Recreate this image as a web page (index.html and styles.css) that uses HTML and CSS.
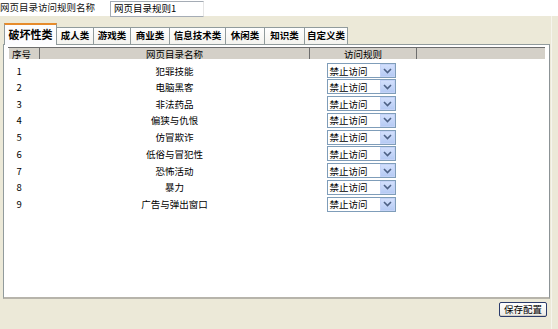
FILE: index.html
```html
<!DOCTYPE html>
<html>
<head>
<meta charset="utf-8">
<link rel="stylesheet" href="styles.css">
</head>
<body>
<div class="top">
  <span class="label">网页目录访问规则名称</span>
  <span class="input">网页目录规则1</span>
</div>
<div class="main">
  <div class="tabs">
    <div class="tab active">破坏性类</div>
    <div class="tab w37">成人类</div>
    <div class="tab w37">游戏类</div>
    <div class="tab w39">商业类</div>
    <div class="tab w56">信息技术类</div>
    <div class="tab w39">休闲类</div>
    <div class="tab w40">知识类</div>
    <div class="tab w43">自定义类</div>
  </div>
  <div class="panel">
    <table class="grid">
      <thead>
        <tr><th class="c1">序号</th><th class="c2">网页目录名称</th><th class="c3">访问规则</th><th class="c4"></th></tr>
      </thead>
      <tbody>
        <tr><td class="num">1</td><td class="name">犯罪技能</td><td class="rule"><span class="sel">禁止访问<i class="dd"><svg width="9" height="6" viewBox="0 0 9 6"><path d="M1 1l3.5 3.5L8 1" fill="none" stroke="#4d6185" stroke-width="1.6"/></svg></i></span></td><td></td></tr>
        <tr><td class="num">2</td><td class="name">电脑黑客</td><td class="rule"><span class="sel">禁止访问<i class="dd"><svg width="9" height="6" viewBox="0 0 9 6"><path d="M1 1l3.5 3.5L8 1" fill="none" stroke="#4d6185" stroke-width="1.6"/></svg></i></span></td><td></td></tr>
        <tr><td class="num">3</td><td class="name">非法药品</td><td class="rule"><span class="sel">禁止访问<i class="dd"><svg width="9" height="6" viewBox="0 0 9 6"><path d="M1 1l3.5 3.5L8 1" fill="none" stroke="#4d6185" stroke-width="1.6"/></svg></i></span></td><td></td></tr>
        <tr><td class="num">4</td><td class="name">偏狭与仇恨</td><td class="rule"><span class="sel">禁止访问<i class="dd"><svg width="9" height="6" viewBox="0 0 9 6"><path d="M1 1l3.5 3.5L8 1" fill="none" stroke="#4d6185" stroke-width="1.6"/></svg></i></span></td><td></td></tr>
        <tr><td class="num">5</td><td class="name">仿冒欺诈</td><td class="rule"><span class="sel">禁止访问<i class="dd"><svg width="9" height="6" viewBox="0 0 9 6"><path d="M1 1l3.5 3.5L8 1" fill="none" stroke="#4d6185" stroke-width="1.6"/></svg></i></span></td><td></td></tr>
        <tr><td class="num">6</td><td class="name">低俗与冒犯性</td><td class="rule"><span class="sel">禁止访问<i class="dd"><svg width="9" height="6" viewBox="0 0 9 6"><path d="M1 1l3.5 3.5L8 1" fill="none" stroke="#4d6185" stroke-width="1.6"/></svg></i></span></td><td></td></tr>
        <tr><td class="num">7</td><td class="name">恐怖活动</td><td class="rule"><span class="sel">禁止访问<i class="dd"><svg width="9" height="6" viewBox="0 0 9 6"><path d="M1 1l3.5 3.5L8 1" fill="none" stroke="#4d6185" stroke-width="1.6"/></svg></i></span></td><td></td></tr>
        <tr><td class="num">8</td><td class="name">暴力</td><td class="rule"><span class="sel">禁止访问<i class="dd"><svg width="9" height="6" viewBox="0 0 9 6"><path d="M1 1l3.5 3.5L8 1" fill="none" stroke="#4d6185" stroke-width="1.6"/></svg></i></span></td><td></td></tr>
        <tr><td class="num">9</td><td class="name">广告与弹出窗口</td><td class="rule"><span class="sel">禁止访问<i class="dd"><svg width="9" height="6" viewBox="0 0 9 6"><path d="M1 1l3.5 3.5L8 1" fill="none" stroke="#4d6185" stroke-width="1.6"/></svg></i></span></td><td></td></tr>
      </tbody>
    </table>
  </div>
  <div class="footer">
    <button class="btn">保存配置</button>
  </div>
</div>
</body>
</html>
```

FILE: styles.css
```css
* { box-sizing: border-box; }
html, body { margin: 0; padding: 0; }
body {
  width: 558px;
  height: 329px;
  background: #ece9d8;
  font-family: "Noto Sans CJK SC", "Noto Sans", sans-serif;
  font-size: 9.5px;
  color: #000;
  overflow: hidden;
}
.top {
  height: 16px;
  background: #fff;
  display: flex;
  align-items: flex-start;
}
.label {
  width: 110px;
  line-height: 13px;
  padding-top: 1px;
  font-size: 9.5px;
  color: #111;
}
.input {
  width: 94px;
  height: 16px;
  margin-top: 1px;
  border: 1px solid #a5acb5;
  border-right-color: #e6e6e6;
  padding-left: 3px;
  line-height: 13px;
  font-size: 9.5px;
}
.main {
  width: 552px;
  height: 313px;
  padding: 7px 0 0 3px;
  background: #ece9d8;
  border-right: 1px solid #f6f5ee;
}
.tabs {
  display: flex;
  align-items: flex-end;
  height: 21px;
  padding-left: 1px;
  position: relative;
  z-index: 1;
}
.tab {
  height: 17px;
  border: 1px solid #919b9c;
  border-bottom: none;
  background: linear-gradient(#fefefe, #f4f3ee);
  font-weight: bold;
  font-size: 9.5px;
  text-align: center;
  line-height: 15px;
  margin-right: -1px;
}
.tab.active {
  width: 53px;
  font-size: 11px;
  line-height: 18px;
  background: #fcfcfe;
  border-top: 2px solid #e68b2c;
  border-color: #e68b2c #919b9c #fcfcfe #919b9c;
  margin-bottom: -1px;
  height: 22px;
}
.w37 { width: 38px; }
.w39 { width: 40px; }
.w40 { width: 41px; }
.w43 { width: 44px; }
.w56 { width: 57px; }
.panel {
  width: 547px;
  height: 255px;
  background: #fff;
  border: 1px solid #919b9c;
  border-right-color: #8c9396;
  border-bottom: 2px solid #b7b4ab;
  padding: 2px 2px 0 4px;
}
.grid {
  border-collapse: collapse;
  width: 537px;
  table-layout: fixed;
}
.grid th {
  height: 12px;
  background: #d4d0c8;
  border-top: 1px solid #6d6d6d;
  border-bottom: 1px solid #fff;
  font-weight: normal;
  font-size: 9.5px;
  line-height: 10px;
  padding: 0;
  text-align: center;
  border-left: 1px solid #fff;
  border-right: 1px solid #6d6d6d;
}
.grid th.c1 { width: 31px; text-align: left; padding-left: 3px; }
.grid th.c2 { width: 270px; }
.grid th.c3 { width: 107px; }
.grid th.c4 { border-right: none; }
.grid td {
  height: 16.75px;
  padding: 0;
  font-size: 9.5px;
  line-height: 12px;
}
.grid tbody tr:first-child td { padding-top: 3px; height: 19px; }
.num { padding-left: 8px !important; }
.name { text-align: center; }
.rule { padding-left: 17px !important; }
.sel {
  display: flex;
  align-items: center;
  width: 69px;
  height: 15px;
  border: 1px solid #7f9db9;
  padding-left: 2px;
  justify-content: space-between;
  background: #fff;
  font-size: 9.5px;
  line-height: 12px;
}
.dd {
  width: 15px;
  height: 13px;
  background: linear-gradient(#d2dffc, #b6cbf4);
  border: 1px solid #c4d3f7;
  display: flex;
  align-items: center;
  justify-content: center;
}
.footer {
  display: flex;
  justify-content: flex-end;
  padding: 3px 4px 0 0;
}
.btn {
  width: 48px;
  height: 15px;
  padding: 0;
  font-family: inherit;
  font-size: 9.5px;
  line-height: 11px;
  background: linear-gradient(#fff, #ecebe6);
  border: 1px solid #2a3b6b;
  border-radius: 2px;
  box-shadow: inset 0 -1px 0 #d6d0c5;
  color: #000;
}
```
